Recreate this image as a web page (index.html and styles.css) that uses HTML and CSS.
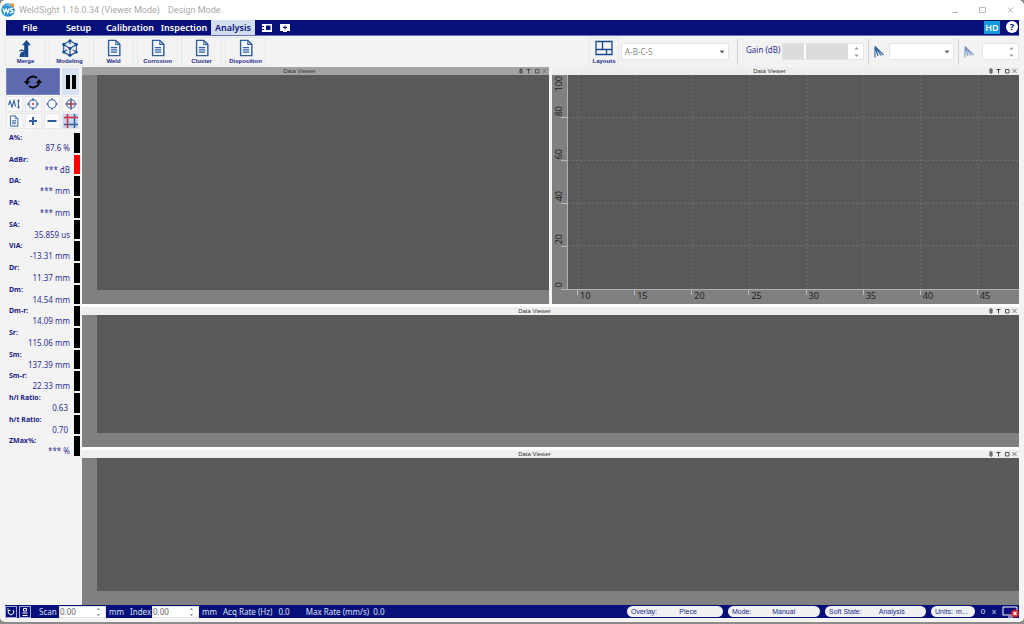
FILE: index.html
```
<!DOCTYPE html>
<html lang="en">
<head>
<meta charset="utf-8">
<title>WeldSight</title>
<link rel="stylesheet" href="styles.css">
</head>
<body>
<svg class="defs" aria-hidden="true">
  <symbol id="doc" viewBox="0 0 16 20"><path d="M2 1.5h8l4.500 4.500v12.500h-12.500z" fill="#f4f8fc" stroke="currentColor" stroke-width="1.600"/><path d="M10 1.500v4.500h4.500" fill="none" stroke="currentColor" stroke-width="1.200"/><path d="M4.500 9.500h7M4.500 12h7M4.500 14.500h7" stroke="currentColor" stroke-width="1.400"/></symbol>
  <symbol id="updown" viewBox="0 0 5 12"><path d="M.5 3.500L2.500 1l2 2.500zM.5 8.500l2 2.500 2-2.500z" fill="currentColor"/></symbol>
  <symbol id="down" viewBox="0 0 6 4"><path d="M.5.5h5L3 3.500z" fill="#666"/></symbol>
  <symbol id="pins" viewBox="0 0 29 8"><path d="M2 2h2v4H2zM2 4h2M8.500 2.500h4M10.500 2.500v4" stroke="#444" fill="none"/><path d="M17.500 2.500h3.500v3.500h-3.500z" stroke="#555" fill="none"/><path d="M24.500 2l4 4M28.500 2l-4 4" stroke="#777" fill="none"/></symbol>
  <symbol id="fan" viewBox="0 0 10 12"><path d="M1 .5v11M1 .5l3 9.500M1 .5l6 9M1 .5l8.500 8.500" stroke="currentColor" fill="none" stroke-width="1.100"/></symbol>
</svg>
<div class="app">
  <header class="titlebar">
    <svg class="logo" viewBox="0 0 26 26"><circle cx="13" cy="13" r="12.500" fill="#2490d0"/><path d="M2 9C6 2 16 0 21 4l-4 3C11 3 6 5 2 9z" fill="#79c4ec"/><path d="M16 2l8-1v9z" fill="#ef8a28"/><path d="M4 10l2.500 8 3-7 3 7 2.500-8M23 10c-6-1-7 3-3 4s2 5-4 4" fill="none" stroke="#fff" stroke-width="2.600"/></svg>
    <span class="app-name">WeldSight 1.16.0.34 (Viewer Mode)</span><span>Design Mode</span>
    <div class="window-buttons">
      <button aria-label="Minimize"><svg viewBox="0 0 8 8"><path d="M1.500 6.500h5" stroke="#aaa"/></svg></button>
      <button aria-label="Maximize"><svg viewBox="0 0 8 8"><path d="M.5 1.500h6v5h-6z" stroke="#bbb" fill="none"/></svg></button>
      <button aria-label="Close"><svg viewBox="0 0 8 8"><path d="M1 1.500l5 5M6 1.500l-5 5" stroke="#aaa"/></svg></button>
    </div>
  </header>
  <div class="frame">
    <nav class="menu">
      <button class="file">File</button><button class="setup">Setup</button><button class="calibration">Calibration</button><button class="inspection">Inspection</button><button class="analysis">Analysis</button>
      <button class="menu-icon" aria-label="Display"><svg viewBox="0 0 12 10"><path d="M1 1h10v8H1z" fill="#fff"/><path d="M5 2.500h4.500v4.500H5z" fill="#07107a"/><path d="M1 3.500h2M1 6.500h2" stroke="#07107a"/></svg></button>
      <button class="menu-icon" aria-label="Add display"><svg viewBox="0 0 12 10"><path d="M1 1h10v7H8v1H4V8H1z" fill="#fff"/><path d="M6 2.500v4M4 4.500h4" stroke="#07107a"/></svg></button>
      <button class="hd">HD</button>
      <button class="help" aria-label="Help">?</button>
    </nav>
    <div class="toolbar">
      <button class="tool"><svg viewBox="0 0 18 20"><path d="M9.500 1l5 6h-3v13H7v-5c-1-2-4-2-6-1 1-3 4-3 6-1V7H4.500z" fill="#174a8d"/><path d="M2 20c0-5 2-6 5-6v6z" fill="#174a8d"/></svg>Merge</button>
      <button class="tool"><svg viewBox="0 0 20 20"><path d="M10 2l7 4v8.500l-7 4-7-4V6zM3 6l7 4.500L17 6M10 10.500v8M10 2v4M3 14.500l4-2.500M17 14.500l-4-2.500" fill="none" stroke="#315f9f" stroke-width="1.400"/><g fill="#174a8d"><circle cx="10" cy="2" r="1.700"/><circle cx="3" cy="6" r="1.700"/><circle cx="17" cy="6" r="1.700"/><circle cx="10" cy="10.500" r="1.700"/><circle cx="3" cy="14.500" r="1.700"/><circle cx="17" cy="14.500" r="1.700"/><circle cx="10" cy="18" r="1.700"/></g></svg>Modeling</button>
      <button class="tool"><svg><use href="#doc"/></svg>Weld</button>
      <button class="tool"><svg><use href="#doc"/></svg>Corrosion</button>
      <button class="tool"><svg><use href="#doc"/></svg>Cluster</button>
      <button class="tool"><svg><use href="#doc"/></svg>Disposition</button>
      <div class="tool-options">
        <button class="tool layouts"><svg viewBox="0 0 18 16"><path d="M1 1.500h16v13H1zM1 9.500h16M7.500 1.500v8M11.500 9.500v5" fill="none" stroke="#174a8d" stroke-width="1.300"/></svg>Layouts</button>
        <div class="select layout-select"><select aria-label="Layout"><option>A-B-C-S</option></select><svg><use href="#down"/></svg></div>
        <i class="separator"></i>
        <label for="gain">Gain (dB)</label>
        <div class="spin gain"><input id="gain" disabled><input aria-label="Gain offset" disabled><svg><use href="#updown"/></svg></div>
        <i class="separator"></i>
        <svg class="fan"><use href="#fan"/></svg>
        <div class="select law-select"><select aria-label="Group"><option></option></select><svg><use href="#down"/></svg></div>
        <i class="separator"></i>
        <svg class="fan faded"><use href="#fan"/></svg>
        <div class="spin law"><input aria-label="Law"><svg><use href="#updown"/></svg></div>
      </div>
    </div>
    <main class="workspace">
      <aside class="sidebar">
        <div class="run">
          <button class="refresh" aria-label="Refresh"><svg viewBox="0 0 18 16"><path d="M3 8a6 5.500 0 0 1 10-4M15 8a6 5.500 0 0 1-10 4" fill="none" stroke="#000" stroke-width="1.800"/><path d="M0 7h6L3 11zM12 9h6l-3-4z"/></svg></button>
          <button class="pause" aria-label="Pause"><svg viewBox="0 0 12 14"><path d="M1 0h4v14H1zM7 0h4v14H7z"/></svg></button>
        </div>
        <div class="icons">
          <button aria-label="Signal"><svg viewBox="0 0 12 12"><path d="M.5 7L2 3l2 6 2-6.500 1.500 6M10.500 2v8M9.500 3l1-1 1 1M9.500 9l1 1 1-1"/></svg></button>
          <button aria-label="Center point"><svg viewBox="0 0 12 12"><circle cx="6" cy="6" r="4.200"/><path d="M6 0v3M6 9v3M0 6h3M9 6h3"/><circle cx="6" cy="6" r=".5" class="red"/></svg></button>
          <button aria-label="Circle"><svg viewBox="0 0 12 12"><circle cx="6" cy="6" r="4.200"/><path d="M6 0v2M6 10v2M0 6h2M10 6h2"/></svg></button>
          <button aria-label="Crosshair"><svg viewBox="0 0 12 12"><circle cx="6" cy="6" r="4.200"/><path d="M6 0v12M0 6h12"/><path class="red" d="M6 2.500v7M2.500 6h7"/></svg></button>
          <button aria-label="Report"><svg><use href="#doc"/></svg></button>
          <button aria-label="Add"><svg viewBox="0 0 12 12"><path class="thick" d="M6 2v8M2 6h8"/></svg></button>
          <button aria-label="Remove"><svg viewBox="0 0 12 12"><path class="thick" d="M1.500 6h9"/></svg></button>
          <button class="active" aria-label="Cursors"><svg class="large" viewBox="0 0 14 14"><path class="line" d="M10.500 0v14M0 10.500h14"/><path class="line red" d="M3.500 0v14M0 3.500h14"/></svg></button>
        </div>
        <dl class="readings">
          <div><dt>A%:</dt><dd>87.6 %</dd></div>
          <div class="alarm"><dt>AdBr:</dt><dd>*** dB</dd></div>
          <div><dt>DA:</dt><dd>*** mm</dd></div>
          <div><dt>PA:</dt><dd>*** mm</dd></div>
          <div><dt>SA:</dt><dd>35.859 us</dd></div>
          <div><dt>ViA:</dt><dd>-13.31 mm</dd></div>
          <div><dt>Dr:</dt><dd>11.37 mm</dd></div>
          <div><dt>Dm:</dt><dd>14.54 mm</dd></div>
          <div><dt>Dm-r:</dt><dd>14.09 mm</dd></div>
          <div><dt>Sr:</dt><dd>115.06 mm</dd></div>
          <div><dt>Sm:</dt><dd>137.39 mm</dd></div>
          <div><dt>Sm-r:</dt><dd>22.33 mm</dd></div>
          <div class="plain"><dt>h/l Ratio:</dt><dd>0.63</dd></div>
          <div class="plain"><dt>h/t Ratio:</dt><dd>0.70</dd></div>
          <div><dt>ZMax%:</dt><dd>*** %</dd></div>
        </dl>
      </aside>
      <div class="viewers">
        <div class="top-row">
          <section class="viewer selected"><h2>Data Viewer<svg><use href="#pins"/></svg></h2><div class="pane"><div class="plot"></div></div></section>
          <section class="viewer"><h2>Data Viewer<svg><use href="#pins"/></svg></h2>
            <div class="pane chart">
              <div class="y-axis"><span><b>80</b><b>100</b></span><span><b>60</b></span><span><b>40</b></span><span><b>20</b></span><span><b>0</b></span></div>
              <div class="plot"><svg class="grid-lines">
                <line x1="2.3%" x2="2.3%" y2="100%"/><line x1="15%" x2="15%" y2="100%"/><line x1="27.600%" x2="27.600%" y2="100%"/><line x1="40.300%" x2="40.300%" y2="100%"/><line x1="53%" x2="53%" y2="100%"/><line x1="65.600%" x2="65.600%" y2="100%"/><line x1="78.300%" x2="78.300%" y2="100%"/><line x1="91%" x2="91%" y2="100%"/>
                <line y1="20%" x2="100%" y2="20%"/><line y1="40%" x2="100%" y2="40%"/><line y1="60%" x2="100%" y2="60%"/><line y1="80%" x2="100%" y2="80%"/>
              </svg></div>
              <div class="x-axis"><i></i><span>10</span><span>15</span><span>20</span><span>25</span><span>30</span><span>35</span><span>40</span><span>45</span></div>
            </div>
          </section>
        </div>
        <section class="viewer"><h2>Data Viewer<svg><use href="#pins"/></svg></h2><div class="pane"><div class="plot"></div></div></section>
        <section class="viewer"><h2>Data Viewer<svg><use href="#pins"/></svg></h2><div class="pane"><div class="plot"></div></div></section>
      </div>
    </main>
    <footer class="status">
      <button class="status-icon" aria-label="Reset"><svg viewBox="0 0 10 10"><path d="M3 3a2.800 2.800 0 1 0 4 0M2 1.500v2h2.500" fill="none" stroke="#fff"/></svg></button>
      <button class="status-icon" aria-label="Encoder"><svg viewBox="0 0 10 10"><path d="M3.500 1.500h3v2.500h-3zM2.500 6h5M2.500 8.500h5" fill="none" stroke="#fff"/></svg></button>
      <label class="scan" for="scan">Scan</label>
      <div class="spin position"><input id="scan" value="0.00"><svg><use href="#updown"/></svg></div><span class="unit">mm</span>
      <label class="index" for="index">Index</label>
      <div class="spin position"><input id="index" value="0.00"><svg><use href="#updown"/></svg></div><span class="unit">mm</span>
      <span class="rate">Acq Rate (Hz)</span><span class="rate">0.0</span>
      <span class="max-rate">Max Rate (mm/s)</span><span class="rate">0.0</span>
      <div class="states">
        <button class="overlay">Overlay:<span>Piece</span></button>
        <button class="mode">Mode:<span>Manual</span></button>
        <button class="soft-state">Soft State:<span>Analysis</span></button>
        <button class="units">Units:<span>m...</span></button>
        <span class="count">0</span><span class="count">x</span>
        <svg class="monitor" viewBox="0 0 17 12"><path d="M1 1h14v8H1zM6 11h5" fill="none" stroke="#fff"/><circle cx="13" cy="7.500" r="3.800" fill="#e32222"/><path d="M11.500 6l3 3M14.500 6l-3 3" stroke="#fff" stroke-width="1.300"/></svg>
      </div>
    </footer>
  </div>
</div>
</body>
</html>
```
FILE: styles.css
```
:root {
  --navy: #07107a;
  --blue: #315f9f;
  --text: #2b3091;
  --panel: #f3f3f3;
}
* { box-sizing: border-box; }
html { background: #8b8b8b; }
body { margin: 0; font: 8px/10px "Noto Sans", "Open Sans", sans-serif; color: var(--text); }
button, input, select { font: inherit; color: inherit; border: 0; padding: 0; margin: 0; background: none; border-radius: 0; }
.defs { position: absolute; width: 0; height: 0; }
.app { min-height: 100vh; display: flex; flex-direction: column; background: var(--panel); border-bottom: 2px solid #8b8b8b; border-radius: 6px; overflow: hidden; }

.titlebar { height: 20px; display: flex; align-items: center; padding: 0 9px 1px 1px; background: #fff; color: #aaa; font-family: Roboto, sans-serif; font-size: 9px; }
.logo { width: 14px; height: 14px; margin-right: 4px; }
.app-name { margin-right: 8px; }
.window-buttons { margin-left: auto; display: flex; gap: 20px; padding-top: 1px; }
.window-buttons button, .window-buttons svg { display: block; width: 8px; height: 8px; }

.frame { flex: 1; display: flex; flex-direction: column; padding: 0 5px 4px; }
.menu { height: 16px; margin-left: 1px; display: flex; align-items: stretch; background: var(--navy); color: #fff; font-size: 9px; font-weight: 600; border-bottom: 1px solid #6d74b8; }
.menu button { white-space: nowrap; }
.file { width: 48px; }
.setup { width: 49px; }
.calibration { width: 54px; }
.inspection { width: 54px; }
.menu .analysis { width: 44px; background: #d2def0; color: var(--navy); }
.menu-icon { width: 18px; display: flex; align-items: center; justify-content: center; }
.menu-icon:nth-child(6) { margin-left: 3px; }
.menu-icon svg { width: 12px; height: 10px; }
.menu .hd { width: 16px; height: 13px; margin: 1px 6px 0 auto; background: #159bdc; }
.menu .help { width: 12px; height: 12px; margin: 1px 1px 0 0; border-radius: 50%; background: #fff; color: var(--navy); font-weight: 700; }

.toolbar { height: 31px; display: flex; gap: 3px; padding: 1px 0; }
.tool { width: 41px; display: flex; flex-direction: column; align-items: center; justify-content: flex-end; border: 1px solid #e9e9e9; color: #1c2c88; font: bold 6px/8px "Liberation Sans", Arial, sans-serif; }
.tool svg { width: 18px; height: 18px; color: var(--blue); }
.tool.layouts { width: 30px; }
.tool-options { margin-left: auto; display: flex; align-items: center; }
.tool-options .tool { height: 29px; margin-right: 2px; }
.tool-options label { width: 36px; padding-bottom: 3px; white-space: nowrap; }
.select { position: relative; height: 17px; }
.select select { appearance: none; width: 100%; height: 100%; padding: 0 3px; background: #fff; border: 1px solid #e6e6e6; color: #888; }
.select svg { position: absolute; right: 4px; top: 7px; width: 6px; height: 4px; pointer-events: none; }
.layout-select { width: 108px; }
.law-select { width: 65px; }
.separator { width: 1px; height: 26px; margin: 0 8px; background: #d4d4d4; }
.separator ~ .separator { margin: 0 5px 0 4px; }
.spin { display: flex; align-items: center; gap: 2px; background: #fff; border: 1px solid #e4e4e4; height: 17px; }
.spin input { min-width: 0; width: 100%; flex: 1; height: 100%; outline: 0; }
.spin svg { flex: none; width: 5px; height: 12px; margin: 0 4px; color: #999; }
.gain { width: 82px; }
.gain input { background: #dcdcdc; border: 0; }
.gain input + input { flex: 2; }
.law { width: 37px; }
.fan { width: 10px; height: 12px; margin-right: 5px; color: var(--blue); }
.faded { opacity: .6; margin-right: 8px; }

.workspace { flex: 1; display: grid; grid-template-columns: 77px minmax(0, 1fr); }
.sidebar { padding: 1px 2px 0 1px; }
.run { height: 27px; display: flex; gap: 2px; padding-right: 1px; }
.run button { display: flex; align-items: center; justify-content: center; }
.refresh { flex: 1; }
.run .refresh { background: #5d6ab0; border: 1px solid #7b85bd; }
.run .pause { width: 17px; background: #d8e3f2; }
.refresh svg { width: 18px; height: 16px; }
.pause svg { width: 12px; height: 14px; }
.icons { display: grid; grid-template-columns: repeat(4, 1fr); grid-auto-rows: 16px; gap: 1px 2px; padding: 1px 1px 0 0; }
.icons button { display: flex; align-items: center; justify-content: center; border: 1px solid #e8e8e8; background: #fafafa; }
.icons svg { width: 12px; height: 12px; fill: none; stroke: var(--blue); stroke-width: 1.1; color: var(--blue); }
.icons svg.large { width: 14px; height: 14px; }
.icons use { stroke: none; }
.icons .red { stroke: #d92b3c; }
.icons .thick { stroke-width: 2; }
.icons .line { stroke-width: 1.5; }
.icons .active { background: #c5d5ed; }
.readings { height: 325px; margin: 4px 0 0; display: grid; grid-template-rows: repeat(15, 1fr); }
.readings div { padding: 0 10px 0 3px; position: relative; }
.readings div::after { content: ""; position: absolute; right: 0; top: 0; bottom: 2px; width: 6px; background: #000; }
.readings .alarm::after { background: #f00; }
.readings dt { font-weight: 700; font-size: 7px; color: #1a2186; }
.readings dd { margin: 0; text-align: right; }
.readings .plain { padding-right: 12px; }

.viewers { display: grid; grid-template-rows: 237fr 144fr 158fr; }
.top-row { display: grid; grid-template-columns: minmax(0, 1fr) minmax(0, 1fr); gap: 3px; }
.viewer { display: flex; flex-direction: column; }
.viewers > .viewer { border-top: 3px solid #fff; }
.viewer h2 { position: relative; margin: 0; height: 8px; padding-right: 32px; text-align: center; color: #333; font: 6px/8px "Liberation Sans", Arial, sans-serif; background: #eee; }
.viewer h2 svg { position: absolute; right: 2px; top: 0; width: 29px; height: 8px; }
.viewer.selected h2 { background: #a3a3a3; }
.pane { flex: 1; display: grid; grid-template: minmax(0, 1fr) 14px / 15px minmax(0, 1fr); background: #808080; color: #222; }
.plot { grid-column: 2; grid-row: 1; background: #595959; }
.chart .plot { border: solid #b0b0b0; border-width: 0 0 1px 1px; }
.grid-lines { display: block; width: 100%; height: 100%; stroke: #707070; stroke-dasharray: 2 2; }
.y-axis { display: grid; grid-template-rows: repeat(5, 1fr); }
.y-axis span { display: flex; flex-direction: column-reverse; justify-content: space-between; align-items: center; padding: 1px 2px 2px 0; background: linear-gradient(#bbb, #bbb) right bottom / 6px 1px no-repeat; }
.y-axis b { font-weight: 400; font-size: 9px; writing-mode: vertical-rl; transform: rotate(180deg); }
.x-axis { grid-column: 2; display: grid; grid-template-columns: 10fr repeat(7, 57fr) 42fr; font-size: 9px; line-height: 12px; }
.x-axis span { padding-left: 3px; background: linear-gradient(#bbb, #bbb) left top / 1px 5px no-repeat; }

.status { height: 13px; display: flex; align-items: center; background: var(--navy); color: #dde0f4; white-space: nowrap; }
.status-icon { width: 12px; height: 12px; margin-right: 2px; }
.status .status-icon { border: 1px solid #a5abd6; }
.status-icon svg { display: block; width: 10px; height: 10px; }
.scan { width: 20px; margin-left: 6px; }
.index { width: 22px; }
.position { width: 47px; height: 12px; color: #666; }
.position svg { height: 10px; }
.unit { flex: none; width: 21px; margin-left: 3px; }
.rate { margin-right: 6px; }
.max-rate { margin: 0 4px 0 10px; }
.states { margin-left: auto; display: flex; align-items: center; gap: 5px; font: 7px/10px "Liberation Sans", Arial, sans-serif; }
.states button { display: flex; height: 11px; align-items: center; padding: 0 4px; border-radius: 6px; background: #f1f1f3; color: #20298c; }
.states button span { flex: 1; text-align: center; }
.states .overlay { width: 96px; }
.states .mode { width: 92px; }
.states .soft-state { width: 101px; }
.states .units { width: 44px; }
.count { width: 6px; text-align: center; font-size: 8px; }
.monitor { width: 17px; height: 12px; }
```
